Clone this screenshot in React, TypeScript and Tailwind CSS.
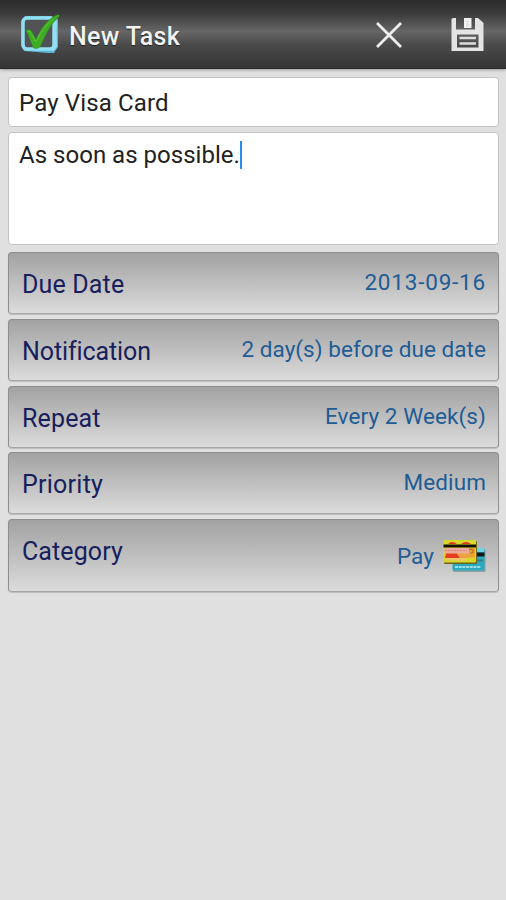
const rows = [
  { label: 'Due Date', value: '2013-09-16', labelTrack: 'tracking-[0.15px]', valueTrack: 'tracking-[0.8px]' },
  { label: 'Notification', value: '2 day(s) before due date', labelTrack: 'tracking-[-0.1px]', valueTrack: 'tracking-[0.05px]' },
  { label: 'Repeat', value: 'Every 2 Week(s)', labelTrack: 'tracking-[0.15px]', valueTrack: 'tracking-[0.1px]' },
  { label: 'Priority', value: 'Medium', labelTrack: 'tracking-[0.25px]', valueTrack: 'tracking-[0.1px]' },
];

const rowStyle =
  'flex w-full justify-between rounded-[4px] border border-[#8e8e8e] border-b-[#a6a6a6] bg-linear-to-b from-[#a2a2a2] to-[#dcdcdc] pr-[12px] pl-[13px] text-left shadow-[0_1px_1px_#bdbdbd]';

function CheckLogo() {
  return (
    <svg width="42" height="42" viewBox="0 0 42 42" className="relative top-px shrink-0">
      <path d="M5 2 31 2 38 5 38 33 34 39 28 39 4 37 1.500 32 1.500 7Z" fill="#5db5d2" />
      <rect x="3" y="4" width="31" height="31" rx="4" fill="#505256" stroke="#91dff3" strokeWidth="3.500" />
      <path d="M36 6.500 36 33 32 37" fill="none" stroke="#9be4f5" strokeWidth="1.500" />
      <path
        d="M6 17C8 14.500 11 15.500 12 18L16 25.500C21 14 28 4 38.500 .5L39.500 2C31 10 26 19 21 31C19.500 35 14 36 12.500 32C10 26 8 20 6 17Z"
        fill="#40ac25"
        stroke="#2b8a1a"
        strokeWidth=".5"
      />
      <path d="M8 17Q11 17 12 21L16 28Q23 13 33 5" fill="none" stroke="#55c832" strokeWidth="1" />
    </svg>
  );
}

function SaveIcon() {
  return (
    <svg width="33" height="34" viewBox="0 0 33 34">
      <path
        fillRule="evenodd"
        fill="#e4e4e4"
        d="M2 0H5V11.500H24V0H27L32.500 5V33H.5V1ZM6 16.500V29.500H27.500V16.500Z"
      />
      <path d="M13 0H20.500V10H13Z" fill="#f0f0f0" />
      <path d="M15.500 2.500H17.500V8.500H15.500Z" fill="#dedede" />
      <path d="M8.500 20H25M8.500 25.500H25" stroke="#dedede" strokeWidth="2.400" />
    </svg>
  );
}

function CardsIcon() {
  return (
    <svg width="43" height="33" viewBox="0 0 43 33" className="shrink-0">
      <rect x="10" y="10" width="32.500" height="22" rx="1" fill="#52767b" opacity=".5" />
      <rect x="9.500" y="8" width="32" height="22.500" rx="1" fill="#2ba9bf" />
      <path d="M33 8H41V12H33Z" fill="#6bd5e1" />
      <path d="M33 12.500H41.500V16.500H33Z" fill="#15191a" />
      <path d="M34 20.500H40" stroke="#387c88" strokeWidth="2" />
      <path d="M12 27H38" stroke="#9be0e8" strokeWidth="2" strokeDasharray="3 .7" />
      <rect x="1" y="1" width="33" height="23" rx="1" fill="#6c6520" />
      <rect x=".5" y="0" width="32.500" height="22.500" rx="1" fill="#d8d82a" />
      <path d="M5 4Q9 0 14 4ZM18 4Q23 0 28 4Z" fill="#df3820" />
      <path d="M.5 4.500H33V7.500H.5Z" fill="#171009" />
      <path d="M1.500 8H26V13.500H1.500Z" fill="#ecaaa0" />
      <path d="M2 10.500H24" stroke="#dc8379" strokeDasharray="2 1" />
      <path d="M26 8H32V17.500H26Z" fill="#e9a52c" />
      <path d="M26 9.500H30V13H27" fill="none" stroke="#ae6822" />
      <path d="M3 13.500H14L17 18H2Z" fill="#e63c24" />
      <path d="M14 13.500H26V18H17Z" fill="#f0a044" />
      <path d="M3 19.500H23" stroke="#f1c178" strokeWidth="2" />
    </svg>
  );
}

export default function App() {
  return (
    <div className="flex h-[900px] w-[506px] flex-col overflow-hidden bg-[#e0e0e0] font-['Roboto',sans-serif]">
      <header className="flex h-[69px] shrink-0 items-center border-b border-[#292929] bg-[linear-gradient(to_bottom,#2c2c2c_0%,#3b3b3b_20%,#666_46%,#4a4a4a_66%,#353535_100%)] pl-5 shadow-[0_1px_3px_#999]">
        <CheckLogo />
        <h1 className="ml-[7px] pt-[6px] text-[25px] leading-7 font-medium tracking-[0.35px] text-[#f3f3f3] [text-shadow:0_1px_1px_#222]">
          New Task
        </h1>
        <button aria-label="Cancel" className="mt-[2px] ml-auto">
          <svg width="28" height="28" viewBox="0 0 28 28">
            <path d="M2 2 26 26M26 2 2 26" stroke="#ededed" strokeWidth="2.800" />
          </svg>
        </button>
        <button aria-label="Save" className="mt-[2px] mr-[22px] ml-[48px]">
          <SaveIcon />
        </button>
      </header>

      <main className="flex flex-col pt-[8px] pr-[7px] pl-[8px]">
        <div className="h-[50px] rounded-[4px] border border-[#c4c4c4] bg-white pt-[11px] pl-[10px] text-[24px] leading-7 tracking-[0.15px] text-[#222]">
          Pay Visa Card
        </div>
        <div className="mt-[5px] flex h-[113px] items-start rounded-[4px] border border-[#c4c4c4] bg-white pt-[8px] pl-[10px] text-[24px] leading-7 tracking-[0.02px] text-[#222]">
          As soon as possible.
          <span className="h-[28px] w-[2px] bg-[#2490ee]" />
        </div>

        <div className="mt-[7px] flex flex-col gap-[4.8px]">
          {rows.map((row) => (
            <button key={row.label} className={`${rowStyle} h-[62px]`}>
              <span className={`pt-[18px] text-[25px] leading-7 text-[#17205c] ${row.labelTrack}`}>{row.label}</span>
              <span className={`pt-[15px] text-[22.5px] leading-7 text-[#215c94] ${row.valueTrack}`}>{row.value}</span>
            </button>
          ))}
          <button className={`${rowStyle} h-[73px]`}>
            <span className="pt-[18px] text-[25px] leading-7 tracking-[0.1px] text-[#17205c]">Category</span>
            <span className="flex items-start gap-[9px] pt-[20px] text-[22.5px] leading-7 tracking-[0.1px] text-[#215c94]">
              <span className="pt-[2px]">Pay</span>
              <CardsIcon />
            </span>
          </button>
        </div>
      </main>
    </div>
  );
}
